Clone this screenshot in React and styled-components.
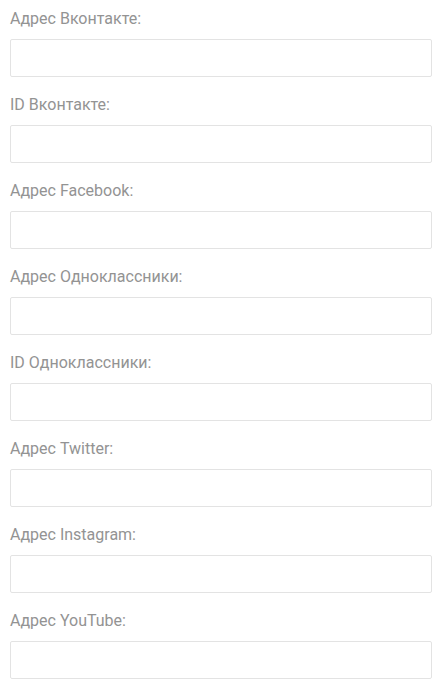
import styled, { createGlobalStyle } from 'styled-components';

const GlobalStyle = createGlobalStyle`
  body {
    margin: 0;
    background: #fff;
    font-family: Roboto, "Liberation Sans", sans-serif;
  }
`;

const Form = styled.form`
  display: flex;
  flex-direction: column;
  gap: 18px;
  padding: 9px 9px 0 10px;
`;

const Field = styled.div`
  display: flex;
  flex-direction: column;
  gap: 10px;
`;

const Label = styled.label`
  font-size: 16px;
  line-height: 20px;
  color: #939393;
`;

const Input = styled.input`
  box-sizing: border-box;
  height: 38px;
  width: 100%;
  border: 1px solid #e3e3e3;
  border-radius: 2px;
  background: #fff;
  padding: 0 10px;
  font-size: 15px;
  outline: none;
`;

const fields = [
  'Адрес Вконтакте:',
  'ID Вконтакте:',
  'Адрес Facebook:',
  'Адрес Одноклассники:',
  'ID Одноклассники:',
  'Адрес Twitter:',
  'Адрес Instagram:',
  'Адрес YouTube:',
];

export default function App() {
  return (
    <>
      <GlobalStyle />
      <Form>
        {fields.map((f, i) => (
          <Field key={i}>
            <Label htmlFor={`f${i}`}>{f}</Label>
            <Input id={`f${i}`} type="text" />
          </Field>
        ))}
      </Form>
    </>
  );
}
